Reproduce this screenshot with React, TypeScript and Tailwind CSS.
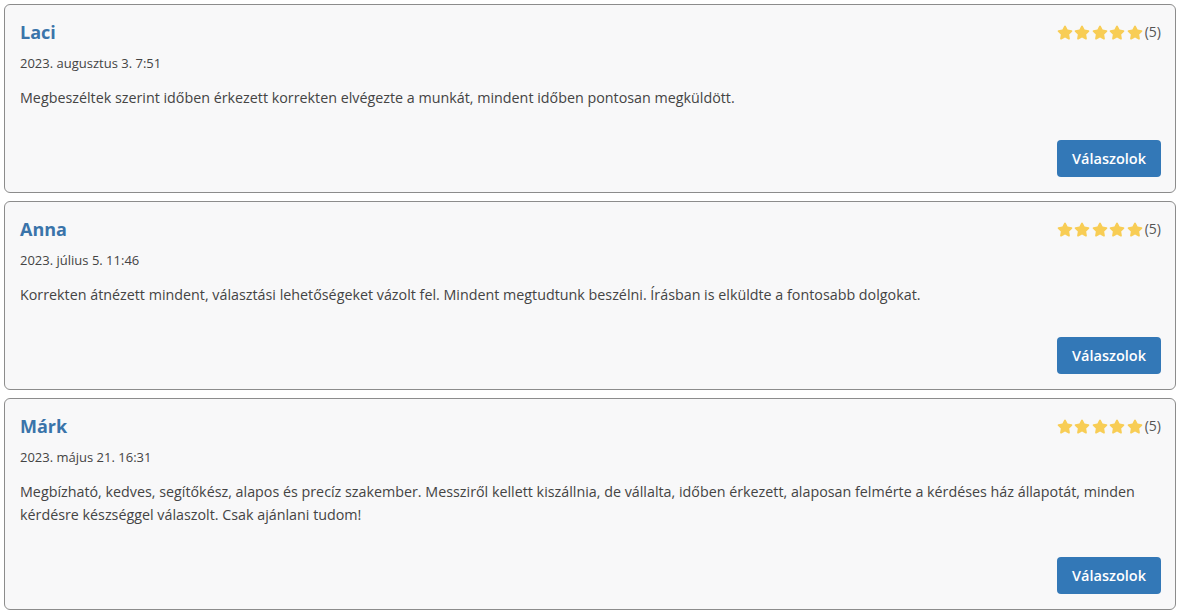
const reviews = [
  {
    name: "Laci",
    date: "2023. augusztus 3. 7:51",
    text: "Megbeszéltek szerint időben érkezett korrekten elvégezte a munkát, mindent időben pontosan megküldött.",
  },
  {
    name: "Anna",
    date: "2023. július 5. 11:46",
    text: "Korrekten átnézett mindent, választási lehetőségeket vázolt fel. Mindent megtudtunk beszélni. Írásban is elküldte a fontosabb dolgokat.",
  },
  {
    name: "Márk",
    date: "2023. május 21. 16:31",
    text: "Megbízható, kedves, segítőkész, alapos és precíz szakember. Messziről kellett kiszállnia, de vállalta, időben érkezett, alaposan felmérte a kérdéses ház állapotát, minden kérdésre készséggel válaszolt. Csak ajánlani tudom!",
  },
];

function Star() {
  return (
    <svg viewBox="0 0 576 512" className="w-[16px] h-[15px]" fill="#f8cd55">
      <path d="M316.9 18C311.6 7 300.4 0 288.1 0s-23.4 7-28.8 18L195 150.3 51.4 171.5c-12 1.8-22 10.2-25.7 21.7s-.7 24.2 7.9 32.7L137.8 329 113.2 474.7c-2 12 3 24.2 12.9 31.3s23 8 33.8 2.3l128.3-68.5 128.3 68.5c10.8 5.7 23.9 4.9 33.8-2.3s14.9-19.3 12.9-31.3L438.5 329 542.7 225.9c8.6-8.5 11.7-21.2 7.9-32.7s-13.7-19.9-25.7-21.7L381.2 150.3 316.9 18z" />
    </svg>
  );
}

export default function App() {
  return (
    <div
      className="bg-white p-[4px] flex flex-col gap-[8px] text-[#444]"
      style={{ fontFamily: '"Open Sans", "Noto Sans", sans-serif' }}
    >
      {reviews.map((r, i) => (
        <div
          key={i}
          className="bg-[#f8f8f9] border border-[#8c8c8c] rounded-[6px] pt-[15px] pb-[15px] pl-[15px] pr-[14px]"
        >
          <div className="flex justify-between items-start">
            <h5 className="text-[18px] leading-[24px] font-bold text-[#3a74aa]">
              {r.name}
            </h5>
            <div className="flex items-center mt-[4px]">
              <div className="flex gap-[1.5px]">
                {[0, 1, 2, 3, 4].map((s) => (
                  <Star key={s} />
                ))}
              </div>
              <span className="text-[14px] leading-[16px] text-[#555] ml-[2px]">(5)</span>
            </div>
          </div>
          <div className="text-[13px] leading-[20px] mt-[9px] text-[#444]">
            {r.date}
          </div>
          <p className="text-[14.3px] leading-[23px] mt-[13px] text-[#444]">
            {r.text}
          </p>
          <div className="flex justify-end mt-[31px]">
            <button className="bg-[#3378b7] text-white text-[14.5px] font-semibold rounded-[4px] w-[104px] h-[37px]">
              Válaszolok
            </button>
          </div>
        </div>
      ))}
    </div>
  );
}
